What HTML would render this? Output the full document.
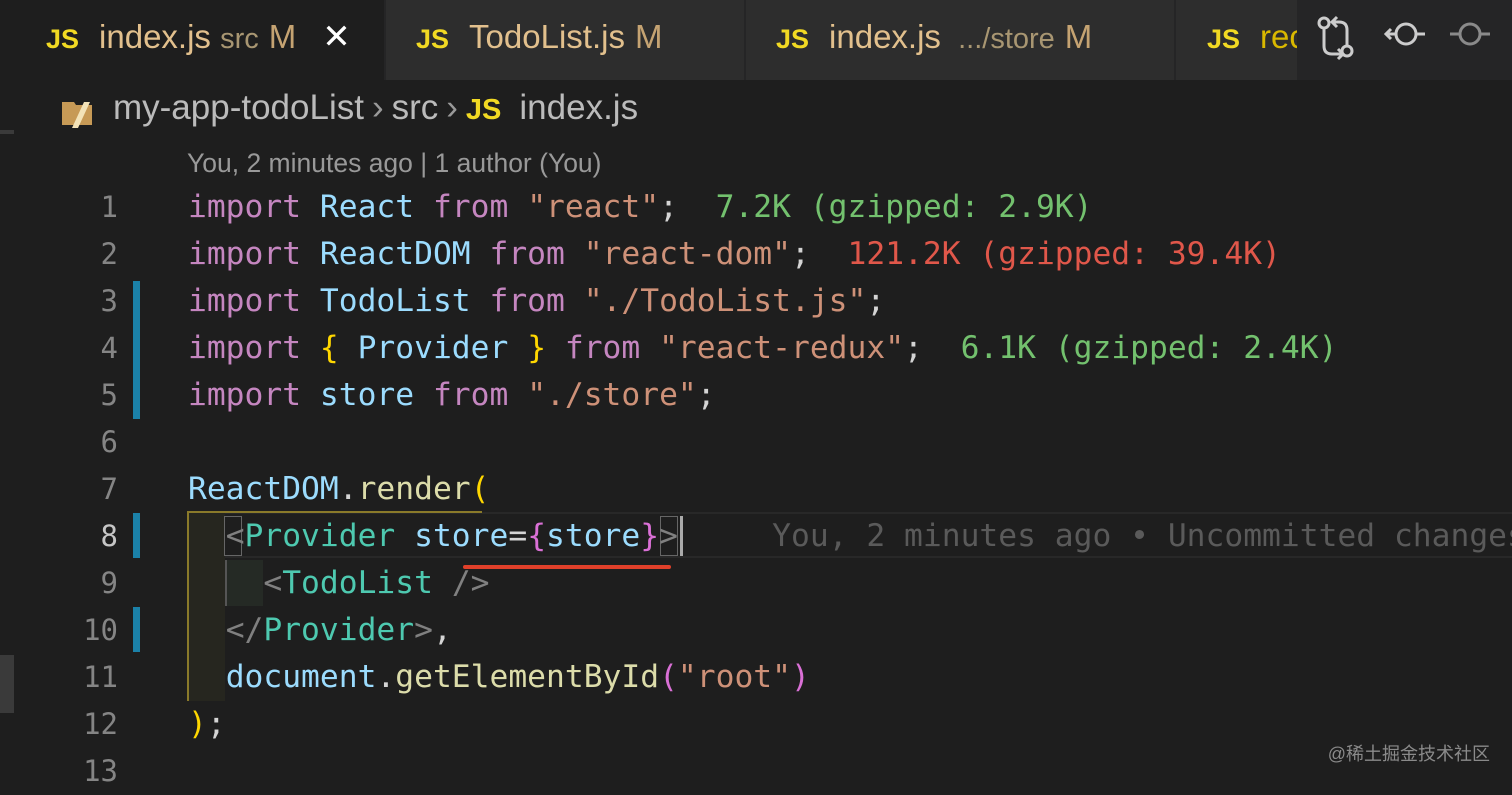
<!DOCTYPE html>
<html><head><meta charset="utf-8"><style>
body{margin:0;width:1512px;height:787px;background:#1e1e1e;overflow:hidden;position:relative;font-family:"Liberation Sans",sans-serif}
.tabs{position:absolute;left:0;top:0;width:1512px;height:80px;background:#252526}
.tab{position:absolute;top:0;height:80px;background:#2d2d2d;border-right:1px solid #252526;font-size:33px;line-height:74px;white-space:nowrap;overflow:hidden}
.js{color:#f1d923;font-weight:bold;font-size:27px;margin-right:20px}
.fn{color:#e2c08d}.m{color:#c5a372;margin-left:10px}.dim{color:#a89672}
.code{position:absolute;left:0;top:184px;font-family:"DejaVu Sans Mono",monospace;font-size:31.3px;line-height:47px;white-space:pre;color:#d4d4d4}
.ln{position:absolute;left:0;width:118px;text-align:right;color:#858585;font-family:"DejaVu Sans Mono",monospace;font-size:29px;line-height:47px}
.row{position:absolute;left:188px;height:47px}
.k{color:#c586c0}.v{color:#9cdcfe}.s{color:#ce9178}.g{color:#73c16e}.r{color:#e0574a}.t{color:#4ec9b0}.b{color:#808080}.f{color:#dcdcaa}.y{color:#ffd700}.p{color:#da70d6}.w{color:#d4d4d4}
.bar{position:absolute;left:133px;width:7px;background:#1b81a8}
.sep{color:#999;margin:0 8px}
</style></head><body>
<div class="tabs">
<div class="tab" style="left:0;width:385px;background:#1e1e1e;padding-left:46px;box-sizing:border-box"><span class="js">JS</span><span class="fn">index.js</span> <span class="dim" style="font-size:29px">src</span><span class="m">M</span><span style="color:#fff;margin-left:26px;font-size:34px">✕</span></div>
<div class="tab" style="left:386px;width:359px;padding-left:30px;box-sizing:border-box"><span class="js">JS</span><span class="fn">TodoList.js</span><span class="m">M</span></div>
<div class="tab" style="left:746px;width:429px;padding-left:30px;box-sizing:border-box"><span class="js">JS</span><span class="fn">index.js</span> <span class="dim" style="font-size:29px;margin-left:8px">.../store</span><span class="m">M</span></div>
<div class="tab" style="left:1176px;width:122px;padding-left:31px;box-sizing:border-box"><span class="js">JS</span><span style="color:#d9b800">rec</span></div>
<svg style="position:absolute;left:1310px;top:10px" width="200" height="60" viewBox="0 0 200 60" fill="none" stroke-width="3">
<g stroke="#cccccc"><circle cx="14" cy="13" r="5"/><path d="M14 18v18q0 8 8 8h10M28 39l5 5-5 5"/><circle cx="37" cy="41" r="5"/><path d="M37 36V20q0-8-8-8h-6M27 7l-5 5 5 5"/>
<circle cx="96" cy="24" r="10"/><path d="M106 24h9M86 24H76M81 19l-5 5 5 5"/></g>
<g stroke="#8a8a8a"><circle cx="160" cy="24" r="10"/><path d="M140 24h10M170 24h10"/></g>
</svg>
</div>
<div style="position:absolute;left:0;top:130px;width:14px;height:4px;background:#3a3a3a"></div>
<div style="position:absolute;left:0;top:655px;width:14px;height:58px;background:#3a3a3a"></div>
<svg style="position:absolute;left:60px;top:94px" width="36" height="36" viewBox="0 0 36 36"><path d="M2 8h12l2 3h16v20H2z" fill="#c79a56"/><path d="M24 8h6l-12 26h-6z" fill="#f3e3b8"/></svg>
<div style="position:absolute;left:113px;top:86px;font-size:35px;line-height:44px;color:#bbbbbb;white-space:nowrap">my-app-todoList<span class="sep">›</span>src<span class="sep">›</span><span class="js" style="margin-right:18px;font-size:29px">JS</span>index.js</div>
<div style="position:absolute;left:187px;top:146px;font-size:26.5px;line-height:34px;color:#999999">You, 2 minutes ago | 1 author (You)</div>
<div class="bar" style="top:281px;height:138px"></div>
<div class="bar" style="top:513px;height:45px"></div>
<div class="bar" style="top:607px;height:45px"></div>
<div style="position:absolute;left:187px;top:512px;width:1325px;height:46px;border-top:2px solid #282828;border-bottom:2px solid #282828;box-sizing:border-box"></div>
<div style="position:absolute;left:187px;top:511px;width:295px;height:190px;border-left:2px solid #8a7a2a;border-top:2px solid #8a7a2a;box-sizing:border-box"></div>
<div style="position:absolute;left:187px;top:699px;width:14px;height:2px;background:#8a7a2a"></div>
<div style="position:absolute;left:189px;top:513px;width:36px;height:188px;background:#26261f"></div>
<div style="position:absolute;left:225px;top:560px;width:36px;height:46px;background:#252a25;border-left:2px solid #555"></div>
<div style="position:absolute;left:224px;top:516px;width:18px;height:40px;border:1.5px solid #666;box-sizing:border-box"></div>
<div style="position:absolute;left:660px;top:516px;width:18px;height:40px;border:1.5px solid #666;box-sizing:border-box"></div>
<div style="position:absolute;left:680px;top:516px;width:3px;height:40px;background:#aaa"></div>
<div style="position:absolute;left:463px;top:565px;width:208px;height:4px;border-radius:2px;background:#e0402a"></div>
<div class="code">
<div class="ln" style="top:0">1</div><div class="ln" style="top:47px">2</div><div class="ln" style="top:94px">3</div><div class="ln" style="top:141px">4</div><div class="ln" style="top:188px">5</div><div class="ln" style="top:235px">6</div><div class="ln" style="top:282px">7</div><div class="ln" style="top:329px;color:#c6c6c6">8</div><div class="ln" style="top:376px">9</div><div class="ln" style="top:423px">10</div><div class="ln" style="top:470px">11</div><div class="ln" style="top:517px">12</div><div class="ln" style="top:564px">13</div>
<div class="row" style="top:0"><span class="k">import</span> <span class="v">React</span> <span class="k">from</span> <span class="s">"react"</span>;  <span class="g">7.2K (gzipped: 2.9K)</span></div>
<div class="row" style="top:47px"><span class="k">import</span> <span class="v">ReactDOM</span> <span class="k">from</span> <span class="s">"react-dom"</span>;  <span class="r">121.2K (gzipped: 39.4K)</span></div>
<div class="row" style="top:94px"><span class="k">import</span> <span class="v">TodoList</span> <span class="k">from</span> <span class="s">"./TodoList.js"</span>;</div>
<div class="row" style="top:141px"><span class="k">import</span> <span class="y">{</span> <span class="v">Provider</span> <span class="y">}</span> <span class="k">from</span> <span class="s">"react-redux"</span>;  <span class="g">6.1K (gzipped: 2.4K)</span></div>
<div class="row" style="top:188px"><span class="k">import</span> <span class="v">store</span> <span class="k">from</span> <span class="s">"./store"</span>;</div>
<div class="row" style="top:282px"><span class="v">ReactDOM</span>.<span class="f">render</span><span class="y">(</span></div>
<div class="row" style="top:329px">  <span class="b">&lt;</span><span class="t">Provider</span> <span class="v">store</span>=<span class="p">{</span><span class="v">store</span><span class="p">}</span><span class="b">&gt;</span>     <span style="color:#5a5a5a">You, 2 minutes ago • Uncommitted changes</span></div>
<div class="row" style="top:376px">    <span class="b">&lt;</span><span class="t">TodoList</span> <span class="b">/&gt;</span></div>
<div class="row" style="top:423px">  <span class="b">&lt;/</span><span class="t">Provider</span><span class="b">&gt;</span>,</div>
<div class="row" style="top:470px">  <span class="v">document</span>.<span class="f">getElementById</span><span class="p">(</span><span class="s">"root"</span><span class="p">)</span></div>
<div class="row" style="top:517px"><span class="y">)</span>;</div>
</div>
<div style="position:absolute;right:22px;top:740px;font-size:18px;color:#8a8a8a;font-family:'Liberation Sans','Noto Sans CJK SC',sans-serif">@稀土掘金技术社区</div>
</body></html>
